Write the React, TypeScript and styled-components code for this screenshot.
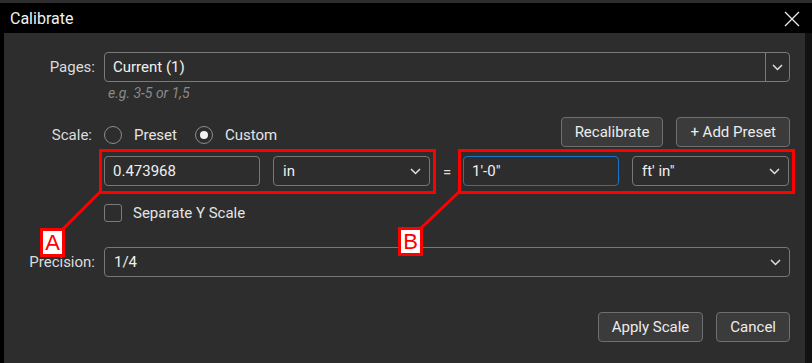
import styled, { createGlobalStyle } from 'styled-components';

const GlobalStyle = createGlobalStyle`
  html, body {
    margin: 0;
    padding: 0;
    background: #2d2d2d;
    font-family: Roboto, "Liberation Sans", sans-serif;
  }
`;

const Chevron = () => (
  <svg width="11" height="7" viewBox="0 0 11 7">
    <path d="M1 1 L5.5 5.5 L10 1" fill="none" stroke="#e0e0e0" strokeWidth="1.5" />
  </svg>
);

const App = () => {
  return (
    <>
      <GlobalStyle />
      <Window>
        <TitleBar>
          <Title>Calibrate</Title>
          <CloseButton aria-label="Close">
            <svg width="16" height="16" viewBox="0 0 16 16">
              <path d="M1 1 L15 15 M15 1 L1 15" stroke="#e6e6e6" strokeWidth="1.4" />
            </svg>
          </CloseButton>
        </TitleBar>
        <Body>
          <Row>
            <Label>Pages:</Label>
            <Combo>
              <ComboText>Current (1)</ComboText>
              <ComboButton>
                <Chevron />
              </ComboButton>
            </Combo>
          </Row>
          <Hint>e.g. 3-5 or 1,5</Hint>

          <ScaleRow>
            <ScaleLabel>Scale:</ScaleLabel>
            <RadioOption>
              <Radio />
              Preset
            </RadioOption>
            <RadioOption>
              <Radio checked />
              Custom
            </RadioOption>
            <Spacer />
            <Button>Recalibrate</Button>
            <Button>+ Add Preset</Button>
          </ScaleRow>

          <Row>
            <Label />
            <Equation>
              <Group>
                <TextField>0.473968</TextField>
                <SelectField>
                  <span>in</span>
                  <Chevron />
                </SelectField>
              </Group>
              <Equals>=</Equals>
              <Group>
                <TextField focused>1'-0"</TextField>
                <SelectField>
                  <span>ft' in"</span>
                  <Chevron />
                </SelectField>
              </Group>
            </Equation>
          </Row>

          <CheckRow>
            <Label />
            <Checkbox />
            Separate Y Scale
          </CheckRow>

          <PrecisionRow>
            <Label>Precision:</Label>
            <SelectField>
              <span>1/4</span>
              <Chevron />
            </SelectField>
          </PrecisionRow>

          <Footer>
            <Button>Apply Scale</Button>
            <Button>Cancel</Button>
          </Footer>
        </Body>

        <Callouts width="812" height="363" viewBox="0 0 812 363">
          <line x1="62" y1="230" x2="100" y2="192" stroke="#ff0000" strokeWidth="3" />
          <line x1="420" y1="229" x2="459" y2="192" stroke="#ff0000" strokeWidth="3" />
        </Callouts>
        <Tag left={40} top={228}>A</Tag>
        <Tag left={398} top={227}>B</Tag>
      </Window>
    </>
  );
};

export default App;

const Window = styled.div`
  position: relative;
  width: 812px;
  height: 363px;
  box-sizing: border-box;
  padding-top: 3px;
  background: #2d2d2d;
  display: flex;
  flex-direction: column;
  overflow: hidden;
`;

const TitleBar = styled.div`
  height: 30px;
  background: #000;
  display: flex;
  align-items: center;
  justify-content: space-between;
  padding: 0 12px 0 10px;
`;

const Title = styled.div`
  color: #f2f2f2;
  font-size: 16px;
`;

const CloseButton = styled.div`
  display: flex;
  align-items: center;
  margin-top: 1px;
`;

const Body = styled.div`
  flex: 1;
  background: #2d2d2d;
  border-left: 4px solid #000;
  border-right: 7px solid #121212;
  padding: 19px 15px 0 0;
  display: flex;
  flex-direction: column;
  color: #e4e4e4;
  font-size: 15px;
`;

const Row = styled.div`
  display: flex;
  align-items: center;
`;

const Label = styled.div`
  width: 100px;
  flex: none;
  box-sizing: border-box;
  padding-right: 9px;
  text-align: right;
  color: #dcdcdc;
`;

const ScaleLabel = styled(Label)`
  margin-top: 5px;
  padding-right: 12px;
`;

const Combo = styled.div`
  flex: 1;
  height: 30px;
  box-sizing: border-box;
  border: 1px solid #7a7a7a;
  border-radius: 4px;
  display: flex;
  align-items: stretch;
`;

const ComboText = styled.div`
  flex: 1;
  display: flex;
  align-items: center;
  padding-left: 8px;
  color: #f0f0f0;
`;

const ComboButton = styled.div`
  width: 23px;
  border-left: 1px solid #7a7a7a;
  display: flex;
  align-items: center;
  justify-content: center;
`;

const Hint = styled.div`
  margin: 2px 0 0 104px;
  line-height: 18px;
  font-size: 14px;
  font-style: italic;
  color: #8a8a8a;
`;

const ScaleRow = styled(Row)`
  margin-top: 15px;
  height: 30px;
`;

const RadioOption = styled.div`
  display: flex;
  align-items: center;
  gap: 12px;
  margin-right: 18px;
  margin-top: 5px;
  color: #e4e4e4;
`;

const Radio = styled.span<{ checked?: boolean }>`
  width: 18px;
  height: 18px;
  box-sizing: border-box;
  border: 1px solid #8c8c8c;
  border-radius: 50%;
  display: flex;
  align-items: center;
  justify-content: center;

  &::after {
    content: '';
    width: 8px;
    height: 8px;
    border-radius: 50%;
    background: #f2f2f2;
    display: ${(p) => (p.checked ? 'block' : 'none')};
  }
`;

const Spacer = styled.div`
  flex: 1;
`;

const Button = styled.div`
  height: 30px;
  box-sizing: border-box;
  padding: 0 13px;
  margin-left: 13px;
  border: 1px solid #6f6f6f;
  border-radius: 4px;
  background: #3b3b3b;
  color: #ececec;
  display: flex;
  align-items: center;
  justify-content: center;
`;

const Equation = styled.div`
  flex: 1;
  display: flex;
  align-items: center;
  margin: 2px -5px 0 -5px;
`;

const Group = styled.div`
  width: 337px;
  flex: none;
  box-sizing: border-box;
  border: 3px solid #ff0000;
  padding: 4px 2px 5px 2px;
  display: grid;
  grid-template-columns: 156px 157px;
  column-gap: 13px;
`;

const Equals = styled.div`
  flex: 1;
  text-align: center;
  color: #dcdcdc;
`;

const TextField = styled.div<{ focused?: boolean }>`
  height: 30px;
  box-sizing: border-box;
  border: 1px solid ${(p) => (p.focused ? '#1b73c6' : '#777')};
  border-radius: 4px;
  padding-left: 8px;
  display: flex;
  align-items: center;
  color: #f0f0f0;
`;

const SelectField = styled.div`
  flex: 1;
  height: 30px;
  box-sizing: border-box;
  border: 1px solid #777;
  border-radius: 4px;
  padding: 0 8px 0 9px;
  display: flex;
  align-items: center;
  justify-content: space-between;
  color: #f0f0f0;
`;

const CheckRow = styled(Row)`
  margin-top: 10px;
  height: 18px;
  color: #e4e4e4;
`;

const Checkbox = styled.span`
  width: 18px;
  height: 18px;
  box-sizing: border-box;
  border: 1px solid #7c7c7c;
  border-radius: 3px;
  margin-right: 11px;
`;

const PrecisionRow = styled(Row)`
  margin-top: 25px;
`;

const Footer = styled.div`
  margin-top: 35px;
  display: flex;
  justify-content: flex-end;
`;

const Callouts = styled.svg`
  position: absolute;
  left: 0;
  top: 0;
  pointer-events: none;
`;

const Tag = styled.div<{ left: number; top: number }>`
  position: absolute;
  left: ${(p) => p.left}px;
  top: ${(p) => p.top}px;
  width: 25px;
  height: 29px;
  box-sizing: border-box;
  border: 3px solid #ff0000;
  background: #fff;
  color: #ff0000;
  font-family: "Liberation Sans", Arial, sans-serif;
  font-size: 22px;
  line-height: 24px;
  text-align: center;
`;
